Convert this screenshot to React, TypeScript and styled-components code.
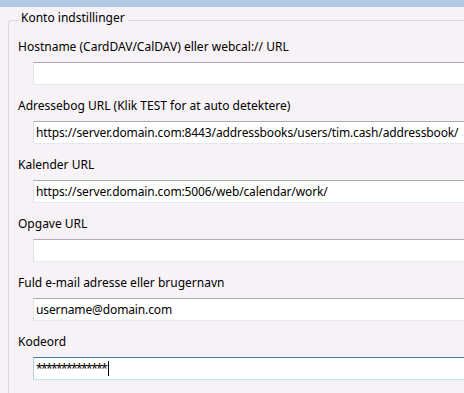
import { createGlobalStyle, styled } from 'styled-components';

const GlobalStyle = createGlobalStyle`
  html, body {
    margin: 0;
    padding: 0;
    background: #f6f2f6;
    overflow: hidden;
  }
  body {
    font-family: "Noto Sans", "Open Sans", sans-serif;
    font-size: 12px;
    color: #000;
  }
`;

const Window = styled.div`
  width: 464px;
  height: 393px;
  overflow: hidden;
`;

const TopStrip = styled.div`
  height: 7px;
  background: #b1cbe7;
`;

const Group = styled.fieldset`
  margin: 3px -40px 0 8px;
  padding: 9px 0 40px 9px;
  border: 1px solid #d9d9dc;
  border-radius: 3px;
  min-width: 0;
`;

const Legend = styled.legend`
  margin-left: 1px;
  padding: 0 3px 4px 2px;
  line-height: 16px;
`;

const Row = styled.div`
  display: flex;
  flex-direction: column;
  padding-bottom: 13px;
`;

const Label = styled.div`
  line-height: 16px;
  height: 16px;
  white-space: nowrap;
`;

const Field = styled.div<{ $focused?: boolean }>`
  margin: 7px 0 0 15px;
  height: 21px;
  box-sizing: content-box;
  background: #fff;
  border: 1px solid ${(p) => (p.$focused ? '#7eb4ea' : '#e3e9ef')};
  border-top-color: ${(p) => (p.$focused ? '#3d7bad' : '#abadb3')};
  border-bottom-color: ${(p) => (p.$focused ? '#c3e2f4' : '#e3e9ef')};
  border-left-color: ${(p) => (p.$focused ? '#b5cfe7' : '#e2e3ea')};
  display: flex;
  align-items: center;
  padding-left: 2px;
  white-space: nowrap;
  line-height: 16px;
  letter-spacing: -0.12px;
`;

const Secret = styled.span`
  letter-spacing: -1.6px;
`;

const Caret = styled.span`
  display: inline-block;
  width: 1px;
  height: 15px;
  background: #000;
  margin-left: 2px;
`;

const fields = [
  { label: 'Hostname (CardDAV/CalDAV) eller webcal:// URL', value: '' },
  {
    label: 'Adressebog URL (Klik TEST for at auto detektere)',
    value: 'https://server.domain.com:8443/addressbooks/users/tim.cash/addressbook/',
  },
  { label: 'Kalender URL', value: 'https://server.domain.com:5006/web/calendar/work/' },
  { label: 'Opgave URL', value: '' },
  { label: 'Fuld e-mail adresse eller brugernavn', value: 'username@domain.com' },
];

export default function App() {
  return (
    <Window>
      <GlobalStyle />
      <TopStrip />
      <Group>
        <Legend>Konto indstillinger</Legend>
        {fields.map((f) => (
          <Row key={f.label}>
            <Label>{f.label}</Label>
            <Field>{f.value}</Field>
          </Row>
        ))}
        <Row>
          <Label>Kodeord</Label>
          <Field $focused>
            <Secret>**************</Secret>
            <Caret />
          </Field>
        </Row>
      </Group>
    </Window>
  );
}
